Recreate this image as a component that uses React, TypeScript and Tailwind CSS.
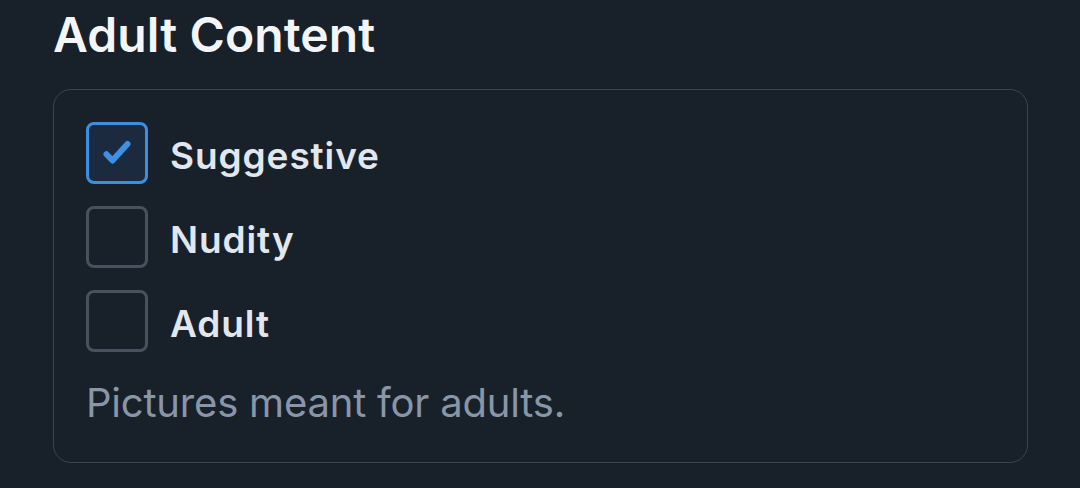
import React, { useState } from 'react';

const options = [
  { id: 'suggestive', label: 'Suggestive' },
  { id: 'nudity', label: 'Nudity' },
  { id: 'adult', label: 'Adult' },
];

const App: React.FC = () => {
  const [checked, setChecked] = useState<Record<string, boolean>>({ suggestive: true });

  return (
    <div className="min-h-screen w-full bg-[#18202a] px-[53px] pt-[6px]" style={{ fontFamily: 'Inter, "Noto Sans", sans-serif' }}>
      <h2 className="text-[48px] leading-[58px] font-semibold text-[#f3f5f8] tracking-[0.1px]">Adult Content</h2>
      <div className="mt-[25px] w-[975px] rounded-[18px] border border-[#3a4553] px-[32px] pt-[32px] pb-[34px]">
        <div className="flex flex-col gap-[22px]">
          {options.map(o => {
            const on = !!checked[o.id];
            return (
              <label key={o.id} className="flex items-center gap-[22px] cursor-pointer" onClick={() => setChecked(c => ({ ...c, [o.id]: !c[o.id] }))}>
                <span className={`flex h-[62px] w-[62px] items-center justify-center rounded-[8px] border-[3px] ${on ? 'border-[#3d8ee0] bg-[#1b2a3e]' : 'border-[#48525f] bg-transparent'}`}>
                  {on && (
                    <svg width="36" height="36" viewBox="0 0 24 24" fill="none" stroke="#3d90e6" strokeWidth="4" strokeLinecap="round" strokeLinejoin="round">
                      <path d="M5 12.8l4 4.2 10-11" />
                    </svg>
                  )}
                </span>
                <span className="pt-[6px] text-[37px] leading-[44px] font-semibold text-[#e2e7ee] tracking-[0.9px]">{o.label}</span>
              </label>
            );
          })}
        </div>
        <p className="mt-[26px] text-[40px] leading-[50px] text-[#8896a8] tracking-[-0.2px]">Pictures meant for adults.</p>
      </div>
    </div>
  );
};

export default App;
